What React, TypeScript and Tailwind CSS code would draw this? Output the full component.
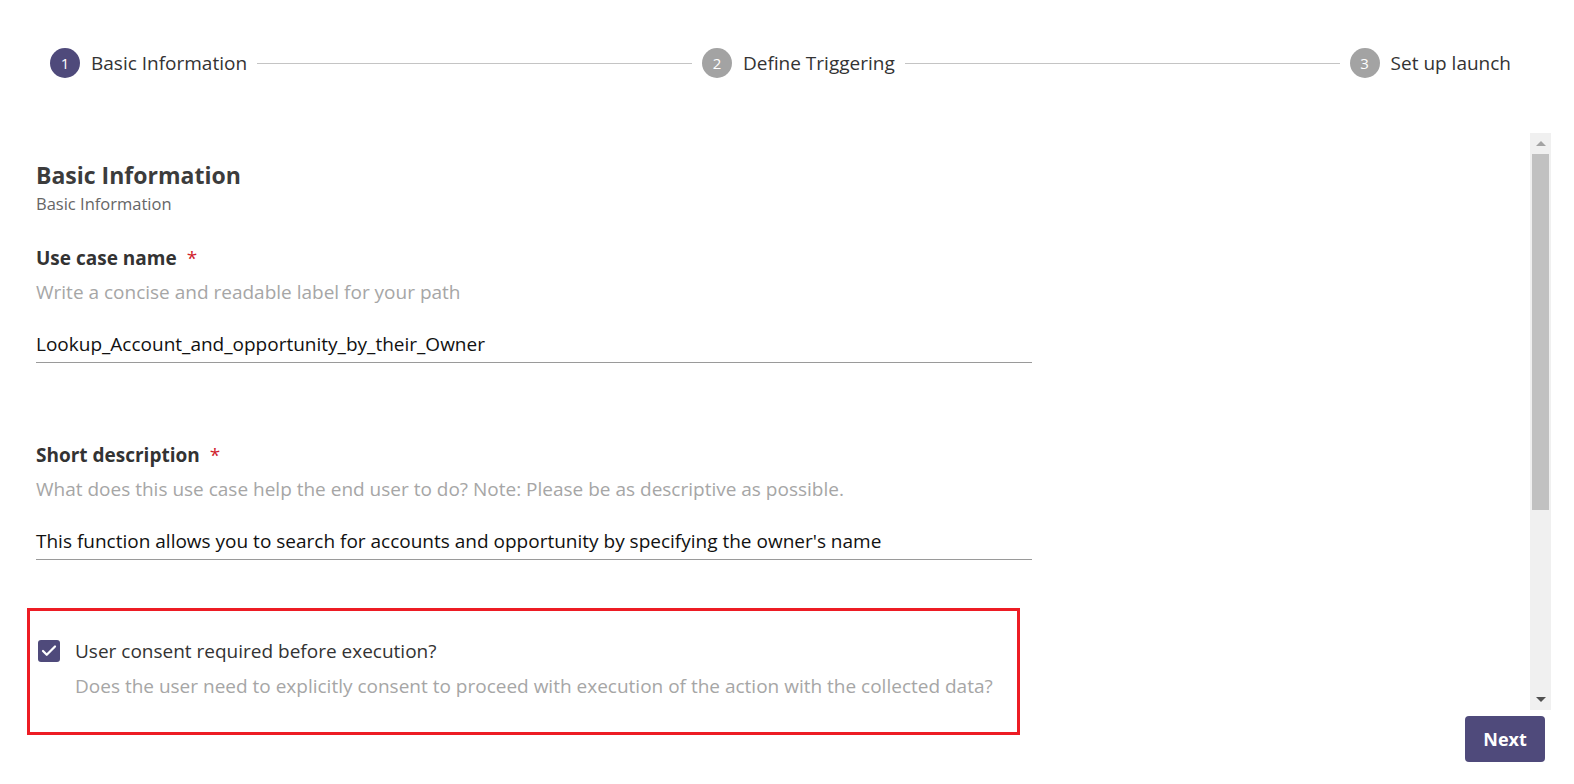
import { Check } from 'lucide-react';

const steps = [
    { n: 1, label: 'Basic Information', active: true },
    { n: 2, label: 'Define Triggering', active: false },
    { n: 3, label: 'Set up launch', active: false },
];

const Step = ({ n, label, active }: { n: number; label: string; active: boolean }) => (
    <div className="flex items-center gap-[11px] shrink-0">
        <div
            className={`w-[30px] h-[30px] rounded-full flex items-center justify-center text-white text-[15px] ${
                active ? 'bg-[#4f4a7b]' : 'bg-[#a3a3a3]'
            }`}
        >
            {n}
        </div>
        <span className="text-[19px] text-[#333]">{label}</span>
    </div>
);

const Field = ({ label, hint, value }: { label: string; hint: string; value: string }) => (
    <div className="w-[996px]">
        <div className="flex items-center h-[26px] text-[19px] font-bold text-[#333]">
            {label}
            <span className="text-[#d0222d] ml-[10px] font-normal">*</span>
        </div>
        <div className="mt-[7px] text-[19px] text-[#a6a6a6]">{hint}</div>
        <div className="mt-[23px] text-[19px] text-[#111] pb-[4px] border-b border-[#9a9a9a]">{value}</div>
    </div>
);

export default function App() {
    return (
        <div className="w-[1574px] h-[784px] bg-white overflow-hidden font-['Open_Sans',sans-serif]">
            {/* Stepper */}
            <div className="flex items-center pt-[48px] pl-[50px] pr-[63px] gap-[10px]">
                <Step {...steps[0]} />
                <div className="flex-1 h-px bg-[#c4c4c4]" />
                <Step {...steps[1]} />
                <div className="flex-1 h-px bg-[#c4c4c4]" />
                <Step {...steps[2]} />
            </div>

            <div className="flex mt-[55px]">
                {/* Form content */}
                <div className="flex-1 pl-[36px] pt-[26px]">
                    <h2 className="text-[23px] font-bold text-[#3c3c3c] leading-[32px]">Basic Information</h2>
                    <div className="mt-[2px] text-[16.5px] text-[#666] leading-[22px]">Basic Information</div>

                    <div className="mt-[30px]">
                        <Field
                            label="Use case name"
                            hint="Write a concise and readable label for your path"
                            value="Lookup_Account_and_opportunity_by_their_Owner"
                        />
                    </div>
                    <div className="mt-[79px]">
                        <Field
                            label="Short description"
                            hint="What does this use case help the end user to do? Note: Please be as descriptive as possible."
                            value="This function allows you to search for accounts and opportunity by specifying the owner's name"
                        />
                    </div>

                    {/* Consent box */}
                    <div className="mt-[48px] -ml-[9px] w-[993px] h-[127px] border-[3px] border-[#ed1c24] pl-[8px] pt-[26px]">
                        <div className="flex items-center gap-[15px]">
                            <div className="w-[22px] h-[22px] rounded-[3px] bg-[#4f4a7b] flex items-center justify-center">
                                <Check className="w-[18px] h-[18px] text-white" strokeWidth={3} />
                            </div>
                            <span className="text-[19px] text-[#333]">User consent required before execution?</span>
                        </div>
                        <div className="ml-[37px] mt-[6px] text-[19px] text-[#a6a6a6]">
                            Does the user need to explicitly consent to proceed with execution of the action with the collected data?
                        </div>
                    </div>
                </div>

                {/* Scrollbar + Next */}
                <div className="flex flex-col items-end mr-[23px]">
                    <div className="w-[21px] h-[577px] bg-[#f0f0f0] flex flex-col items-center">
                        <div className="h-[21px] flex items-center justify-center">
                            <div className="w-0 h-0 border-l-[5px] border-r-[5px] border-b-[5px] border-l-transparent border-r-transparent border-b-[#a3a3a3]" />
                        </div>
                        <div className="w-[17px] h-[356px] bg-[#c1c1c1]" />
                        <div className="flex-1" />
                        <div className="h-[21px] flex items-center justify-center">
                            <div className="w-0 h-0 border-l-[5px] border-r-[5px] border-t-[5px] border-l-transparent border-r-transparent border-t-[#505050]" />
                        </div>
                    </div>
                    <button className="mt-[6px] mr-[6px] w-[80px] h-[46px] rounded-[4px] bg-[#4f4a7b] text-white font-bold text-[18px]">
                        Next
                    </button>
                </div>
            </div>
        </div>
    );
}
